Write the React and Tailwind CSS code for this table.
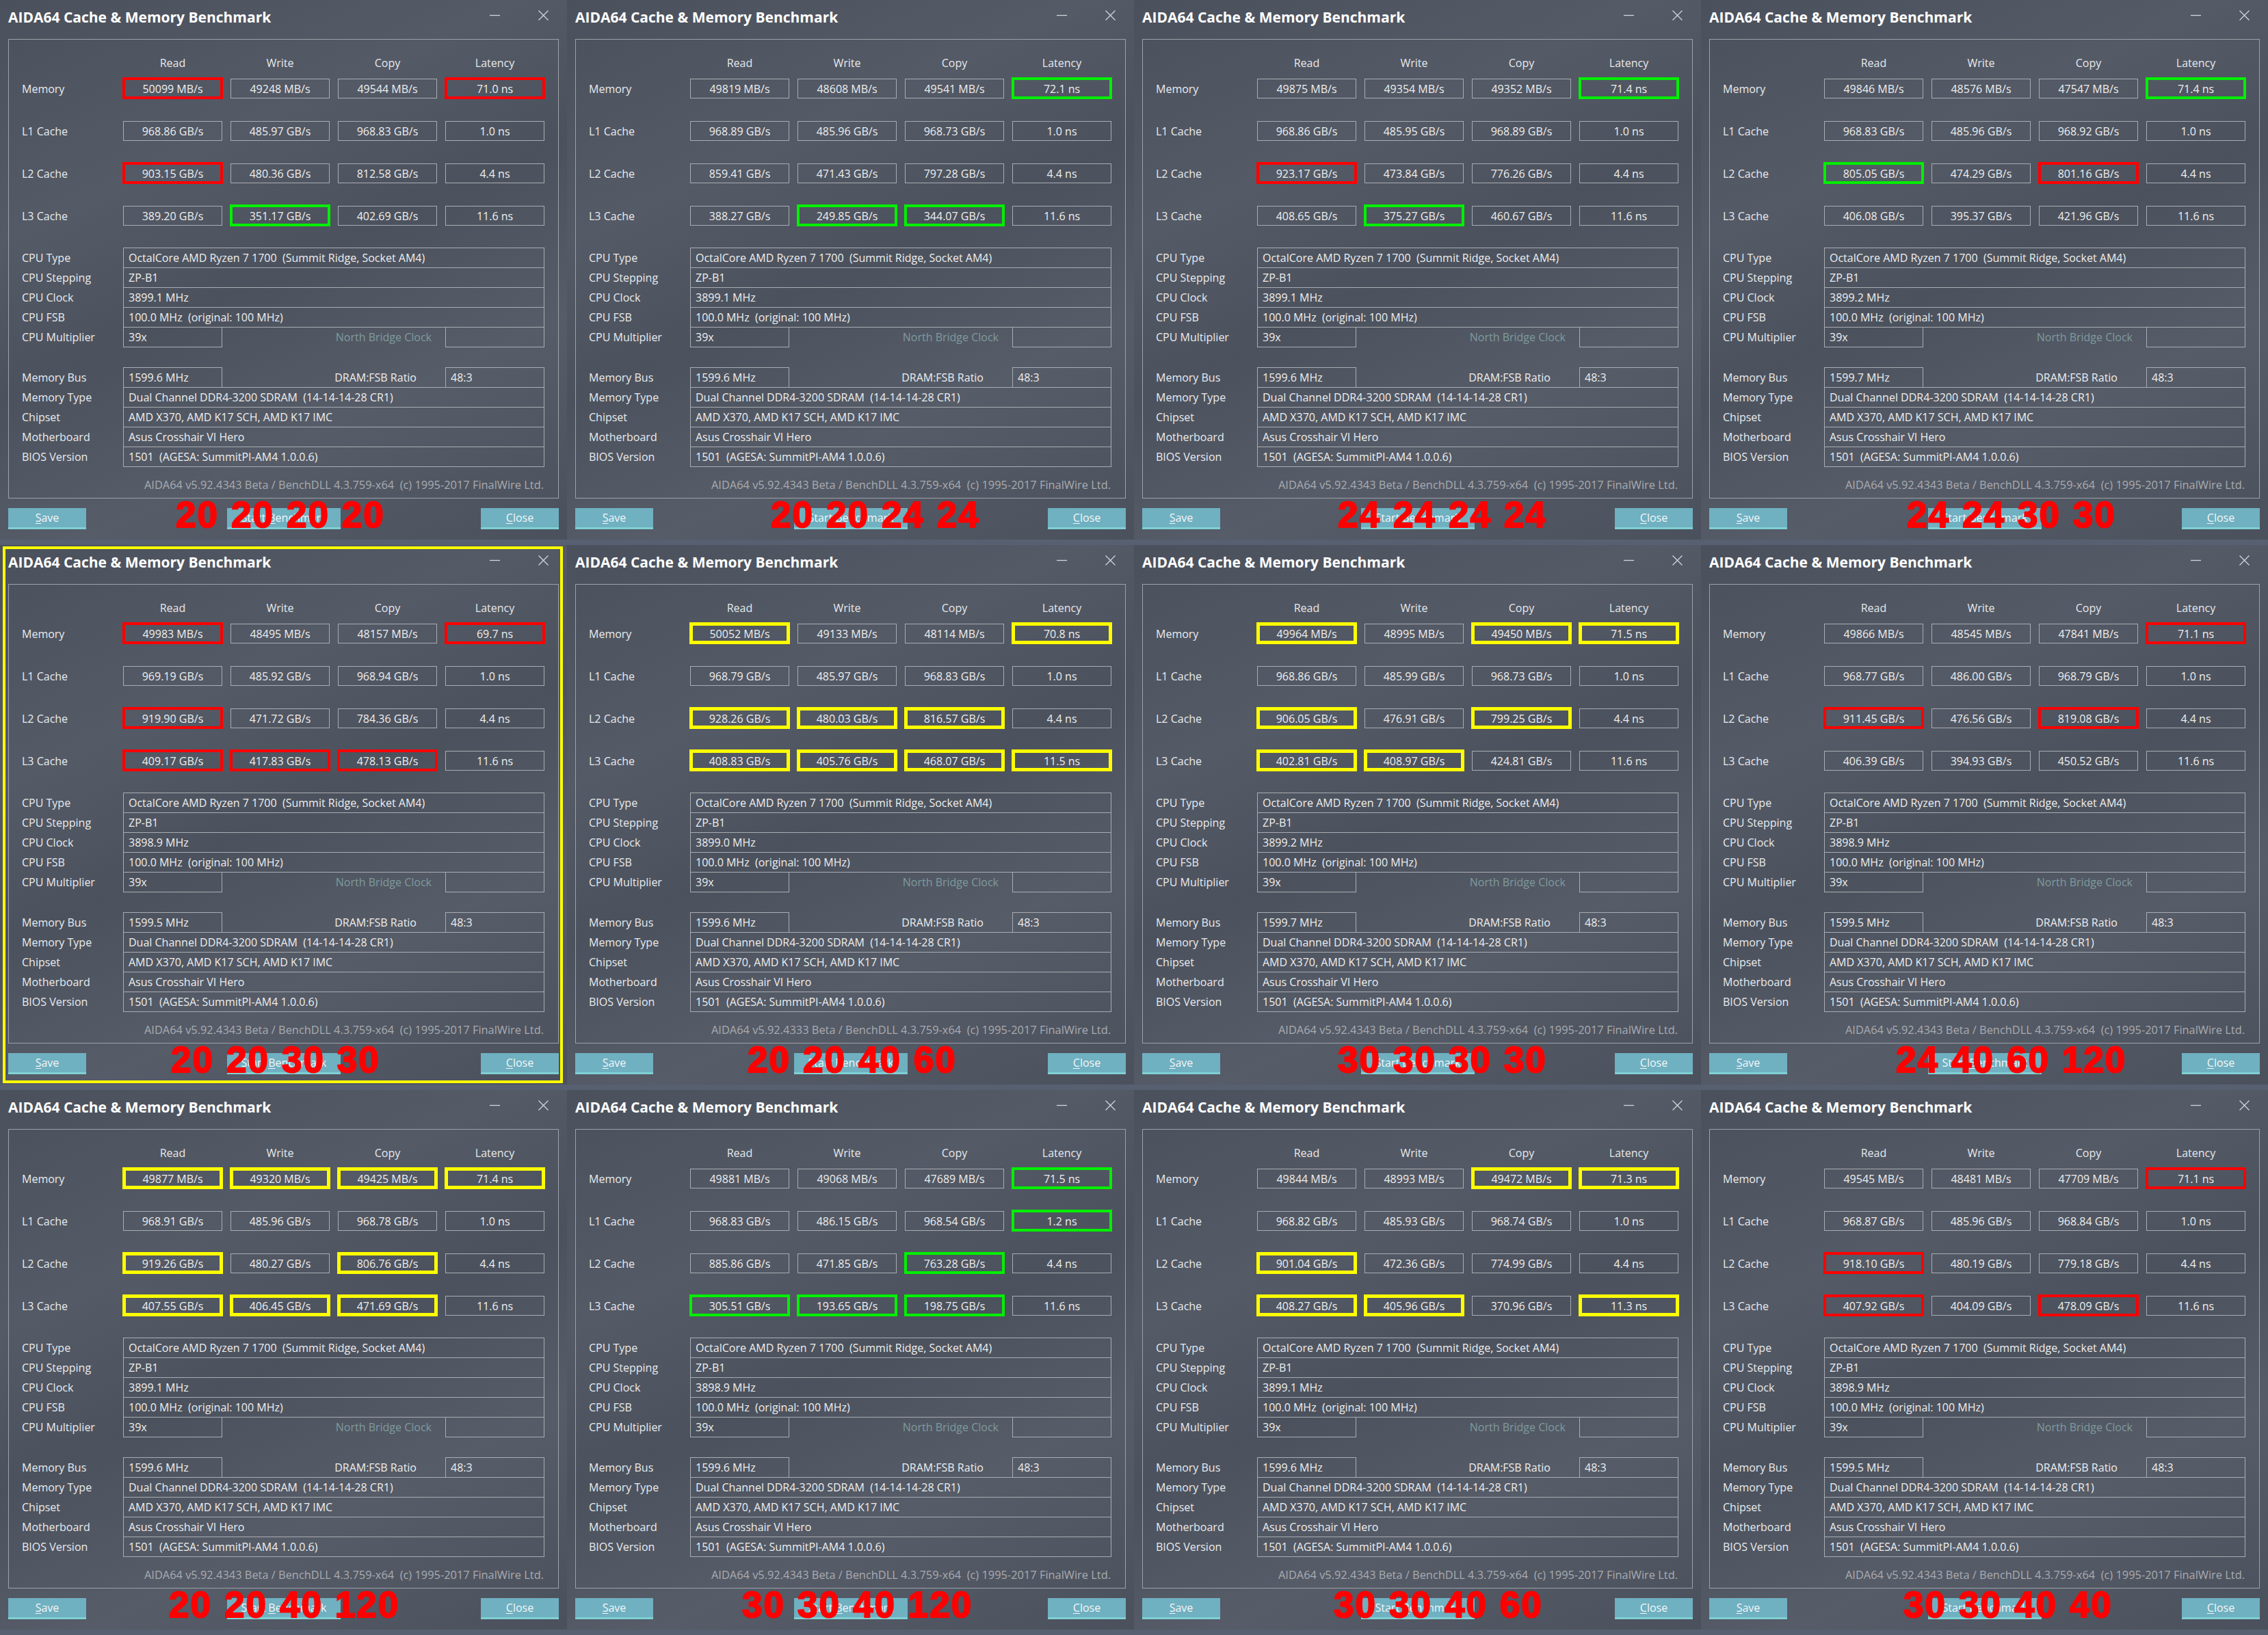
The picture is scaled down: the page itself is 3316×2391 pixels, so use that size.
import React from "react";

const W = [
  { v: [["50099 MB/s","49248 MB/s","49544 MB/s","71.0 ns"],["968.86 GB/s","485.97 GB/s","968.83 GB/s","1.0 ns"],["903.15 GB/s","480.36 GB/s","812.58 GB/s","4.4 ns"],["389.20 GB/s","351.17 GB/s","402.69 GB/s","11.6 ns"]], hl: ["r..r","....","r...",".g.."], clock: "3899.1 MHz", bus: "1599.6 MHz", ver: "4343", nums: ["20","20","20","20"], left: "left-[257px]" },
  { v: [["49819 MB/s","48608 MB/s","49541 MB/s","72.1 ns"],["968.89 GB/s","485.96 GB/s","968.73 GB/s","1.0 ns"],["859.41 GB/s","471.43 GB/s","797.28 GB/s","4.4 ns"],["388.27 GB/s","249.85 GB/s","344.07 GB/s","11.6 ns"]], hl: ["...g","....","....",".gg."], clock: "3899.1 MHz", bus: "1599.6 MHz", ver: "4343", nums: ["20","20","24","24"], left: "left-[298px]" },
  { v: [["49875 MB/s","49354 MB/s","49352 MB/s","71.4 ns"],["968.86 GB/s","485.95 GB/s","968.89 GB/s","1.0 ns"],["923.17 GB/s","473.84 GB/s","776.26 GB/s","4.4 ns"],["408.65 GB/s","375.27 GB/s","460.67 GB/s","11.6 ns"]], hl: ["...g","....","r...",".g.."], clock: "3899.1 MHz", bus: "1599.6 MHz", ver: "4343", nums: ["24","24","24","24"], left: "left-[298px]" },
  { v: [["49846 MB/s","48576 MB/s","47547 MB/s","71.4 ns"],["968.83 GB/s","485.96 GB/s","968.92 GB/s","1.0 ns"],["805.05 GB/s","474.29 GB/s","801.16 GB/s","4.4 ns"],["406.08 GB/s","395.37 GB/s","421.96 GB/s","11.6 ns"]], hl: ["...g","....","g.r.","...."], clock: "3899.2 MHz", bus: "1599.7 MHz", ver: "4343", nums: ["24","24","30","30"], left: "left-[301px]" },
  { v: [["49983 MB/s","48495 MB/s","48157 MB/s","69.7 ns"],["969.19 GB/s","485.92 GB/s","968.94 GB/s","1.0 ns"],["919.90 GB/s","471.72 GB/s","784.36 GB/s","4.4 ns"],["409.17 GB/s","417.83 GB/s","478.13 GB/s","11.6 ns"]], hl: ["r..r","....","r...","rrr."], clock: "3898.9 MHz", bus: "1599.5 MHz", ver: "4343", nums: ["20","20","30","30"], left: "left-[250px]", frame: true },
  { v: [["50052 MB/s","49133 MB/s","48114 MB/s","70.8 ns"],["968.79 GB/s","485.97 GB/s","968.83 GB/s","1.0 ns"],["928.26 GB/s","480.03 GB/s","816.57 GB/s","4.4 ns"],["408.83 GB/s","405.76 GB/s","468.07 GB/s","11.5 ns"]], hl: ["y..y","....","yyy.","yyyy"], clock: "3899.0 MHz", bus: "1599.6 MHz", ver: "4333", nums: ["20","20","40","60"], left: "left-[264px]" },
  { v: [["49964 MB/s","48995 MB/s","49450 MB/s","71.5 ns"],["968.86 GB/s","485.99 GB/s","968.73 GB/s","1.0 ns"],["906.05 GB/s","476.91 GB/s","799.25 GB/s","4.4 ns"],["402.81 GB/s","408.97 GB/s","424.81 GB/s","11.6 ns"]], hl: ["y.yy","....","y.y.","yy.."], clock: "3899.2 MHz", bus: "1599.7 MHz", ver: "4343", nums: ["30","30","30","30"], left: "left-[298px]" },
  { v: [["49866 MB/s","48545 MB/s","47841 MB/s","71.1 ns"],["968.77 GB/s","486.00 GB/s","968.79 GB/s","1.0 ns"],["911.45 GB/s","476.56 GB/s","819.08 GB/s","4.4 ns"],["406.39 GB/s","394.93 GB/s","450.52 GB/s","11.6 ns"]], hl: ["...r","....","r.r.","...."], clock: "3898.9 MHz", bus: "1599.5 MHz", ver: "4343", nums: ["24","40","60","120"], left: "left-[285px]" },
  { v: [["49877 MB/s","49320 MB/s","49425 MB/s","71.4 ns"],["968.91 GB/s","485.96 GB/s","968.78 GB/s","1.0 ns"],["919.26 GB/s","480.27 GB/s","806.76 GB/s","4.4 ns"],["407.55 GB/s","406.45 GB/s","471.69 GB/s","11.6 ns"]], hl: ["yyyy","....","y.y.","yyy."], clock: "3899.1 MHz", bus: "1599.6 MHz", ver: "4343", nums: ["20","20","40","120"], left: "left-[247px]" },
  { v: [["49881 MB/s","49068 MB/s","47689 MB/s","71.5 ns"],["968.83 GB/s","486.15 GB/s","968.54 GB/s","1.2 ns"],["885.86 GB/s","471.85 GB/s","763.28 GB/s","4.4 ns"],["305.51 GB/s","193.65 GB/s","198.75 GB/s","11.6 ns"]], hl: ["...g","...g","..g.","ggg."], clock: "3898.9 MHz", bus: "1599.6 MHz", ver: "4343", nums: ["30","30","40","120"], left: "left-[256px]" },
  { v: [["49844 MB/s","48993 MB/s","49472 MB/s","71.3 ns"],["968.82 GB/s","485.93 GB/s","968.74 GB/s","1.0 ns"],["901.04 GB/s","472.36 GB/s","774.99 GB/s","4.4 ns"],["408.27 GB/s","405.96 GB/s","370.96 GB/s","11.3 ns"]], hl: ["..yy","....","y...","yy.y"], clock: "3899.1 MHz", bus: "1599.6 MHz", ver: "4343", nums: ["30","30","40","60"], left: "left-[292px]" },
  { v: [["49545 MB/s","48481 MB/s","47709 MB/s","71.1 ns"],["968.87 GB/s","485.96 GB/s","968.84 GB/s","1.0 ns"],["918.10 GB/s","480.19 GB/s","779.18 GB/s","4.4 ns"],["407.92 GB/s","404.09 GB/s","478.09 GB/s","11.6 ns"]], hl: ["...r","....","r...","r.r."], clock: "3898.9 MHz", bus: "1599.5 MHz", ver: "4343", nums: ["30","30","40","40"], left: "left-[296px]" },
];

const HL = {
  r: "border-[4px] border-[#ff0000]",
  g: "border-[4px] border-[#00f000]",
  y: "border-[5px] border-[#ffff00]",
};

const ROWS = ["Memory", "L1 Cache", "L2 Cache", "L3 Cache"];
const HEADS = ["Read", "Write", "Copy", "Latency"];

function Cell({ v, h }) {
  return (
    <div className="relative w-[145px] h-[29px] border border-[#a9acb2] flex items-center justify-center text-[16px] text-[#eeeeee]">
      {v}
      {h !== "." && (
        <span className={`pointer-events-none absolute left-[-2px] right-[-2px] top-[-3px] bottom-[-2px] ${HL[h]}`} />
      )}
    </div>
  );
}

function Label({ children }) {
  return <div className="w-[148px] shrink-0 text-[16px] text-[#e9ebee] whitespace-nowrap">{children}</div>;
}

function InfoRow({ label, value, first }) {
  return (
    <div className={`flex items-center ${first ? "" : "-mt-px"}`}>
      <Label>{label}</Label>
      <div className="w-[616px] h-[30px] border border-[#a9acb2] px-[7px] flex items-center text-[16px] text-[#eeeeee] whitespace-pre">
        {value}
      </div>
    </div>
  );
}

function SplitRow({ label, left, mid, midClass, midPad, right, first }) {
  return (
    <div className={`flex items-center ${first ? "" : "-mt-px"}`}>
      <Label>{label}</Label>
      <div className="w-[616px] h-[30px] flex">
        <div className="w-[145px] h-[30px] border border-[#a9acb2] px-[7px] flex items-center text-[16px] text-[#eeeeee]">{left}</div>
        <div className={`flex-1 flex items-center justify-end text-[16px] ${midPad} ${midClass}`}>{mid}</div>
        <div className="w-[145px] h-[30px] border border-[#a9acb2] px-[7px] flex items-center text-[16px] text-[#eeeeee]">{right}</div>
      </div>
    </div>
  );
}

function Btn({ w, children }) {
  return (
    <div className={`${w} h-[31px] bg-[#6fb0c1] border-b-[3px] border-[#7fd0d4] flex items-center justify-center text-[16px] text-[#f4f6f7]`}>
      {children}
    </div>
  );
}

function Window({ d }) {
  return (
    <div className="relative w-[829px] h-[789px] flex flex-col bg-[linear-gradient(155deg,#4b515c_0%,#545a66_30%,#4c525d_50%,#565c68_72%,#4b515c_100%)]">
      <div className="h-[50px] flex items-center pl-[12px] pr-[27px]">
        <div className="text-[21px] font-bold text-white leading-none whitespace-nowrap">AIDA64 Cache &amp; Memory Benchmark</div>
        <svg className="ml-auto -mt-[6px]" width="15" height="15" viewBox="0 0 15 15">
          <line x1="0" y1="7.5" x2="15" y2="7.5" stroke="#d4d6da" strokeWidth="1.3" />
        </svg>
        <svg className="ml-[56px] -mt-[6px]" width="15" height="15" viewBox="0 0 15 15">
          <line x1="0.5" y1="0.5" x2="14.5" y2="14.5" stroke="#d4d6da" strokeWidth="1.3" />
          <line x1="14.5" y1="0.5" x2="0.5" y2="14.5" stroke="#d4d6da" strokeWidth="1.3" />
        </svg>
      </div>

      <div className="mx-[12px] mt-[7px] h-[672px] border border-[#9da1a8] flex flex-col pl-[19px]">
        <div className="h-[57px] flex items-center pt-[11px]">
          <div className="w-[148px]" />
          <div className="flex gap-[12px]">
            {HEADS.map((h) => (
              <div key={h} className="w-[145px] text-center text-[16px] text-[#e6e8eb]">{h}</div>
            ))}
          </div>
        </div>

        <div className="flex flex-col gap-[33px]">
          {ROWS.map((r, i) => (
            <div key={r} className="flex items-center">
              <Label>{r}</Label>
              <div className="flex gap-[12px]">
                {d.v[i].map((val, j) => (
                  <Cell key={j} v={val} h={d.hl[i][j]} />
                ))}
              </div>
            </div>
          ))}
        </div>

        <div className="mt-[32px] flex flex-col">
          <InfoRow first label="CPU Type" value="OctalCore AMD Ryzen 7 1700  (Summit Ridge, Socket AM4)" />
          <InfoRow label="CPU Stepping" value="ZP-B1" />
          <InfoRow label="CPU Clock" value={d.clock} />
          <InfoRow label="CPU FSB" value="100.0 MHz  (original: 100 MHz)" />
          <SplitRow label="CPU Multiplier" left="39x" mid="North Bridge Clock" midClass="text-[#7f9b9d]" midPad="pr-[20px]" right="" />
        </div>

        <div className="mt-[29px] flex flex-col">
          <SplitRow first label="Memory Bus" left={d.bus} mid="DRAM:FSB Ratio" midClass="text-[#eeeeee]" midPad="pr-[42px]" right="48:3" />
          <InfoRow label="Memory Type" value="Dual Channel DDR4-3200 SDRAM  (14-14-14-28 CR1)" />
          <InfoRow label="Chipset" value="AMD X370, AMD K17 SCH, AMD K17 IMC" />
          <InfoRow label="Motherboard" value="Asus Crosshair VI Hero" />
          <InfoRow label="BIOS Version" value="1501  (AGESA: SummitPI-AM4 1.0.0.6)" />
        </div>

        <div className="flex-1 flex items-center justify-end pr-[21px] pt-[7px] text-[16.4px] text-[#a9abb0] whitespace-pre">
          {`AIDA64 v5.92.${d.ver} Beta / BenchDLL 4.3.759-x64  (c) 1995-2017 FinalWire Ltd.`}
        </div>
      </div>

      <div className="mt-[14px] flex px-[12px]">
        <Btn w="w-[114px]"><span><span className="underline underline-offset-2">S</span>ave</span></Btn>
        <div className="ml-[206px]">
          <Btn w="w-[166px]"><span>Start <span className="underline underline-offset-2">B</span>enchmark</span></Btn>
        </div>
        <div className="ml-auto">
          <Btn w="w-[114px]"><span><span className="underline underline-offset-2">C</span>lose</span></Btn>
        </div>
      </div>

      <div className={`absolute top-[726px] ${d.left} flex gap-[18px] text-[53px] leading-none font-bold tracking-[2px] text-[#ff0000] [-webkit-text-stroke:2px_#ff0000] [font-family:'Liberation_Sans',Arial,sans-serif]`}>
        {d.nums.map((n, i) => (
          <span key={i}>{n}</span>
        ))}
      </div>

      {d.frame && (
        <div className="pointer-events-none absolute left-[4px] top-[2px] w-[819px] h-[785px] border-[4px] border-[#ffff00]" />
      )}
    </div>
  );
}

export default function App() {
  const rows = [W.slice(0, 4), W.slice(4, 8), W.slice(8, 12)];
  return (
    <div className="w-[3316px] h-[2391px] flex flex-col bg-[#4c525d] [font-family:'Open_Sans','Noto_Sans',sans-serif]">
      {rows.map((r, i) => (
        <div key={i} className="flex flex-col">
          <div className="flex">
            {r.map((d, j) => (
              <Window key={j} d={d} />
            ))}
          </div>
          <div className="h-[8px] bg-[#566070]" />
        </div>
      ))}
    </div>
  );
}
